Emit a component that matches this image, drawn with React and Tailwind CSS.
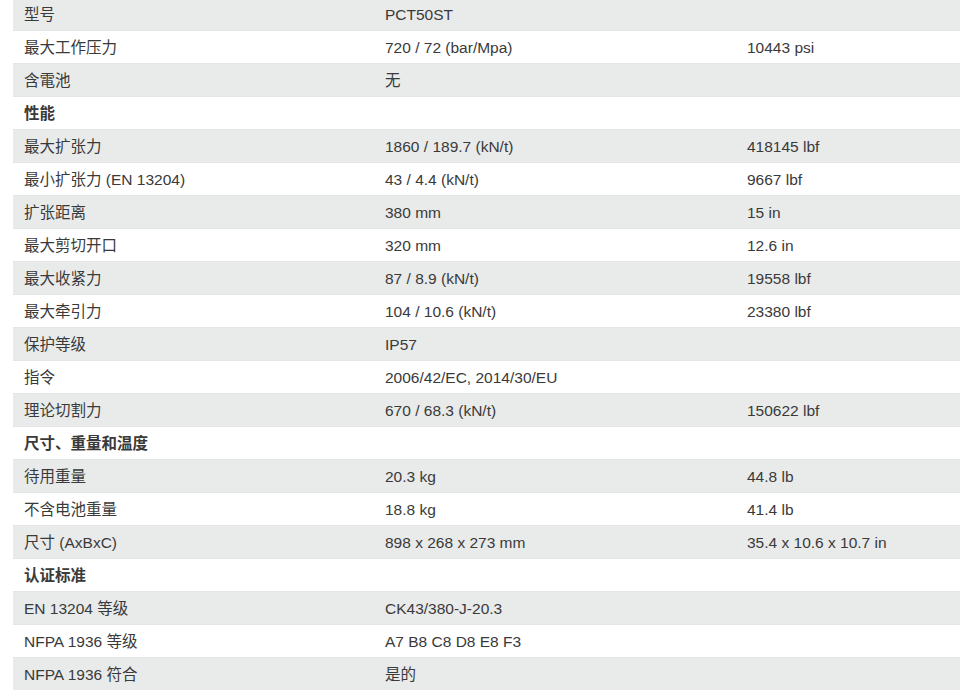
const rows = [
  ["型号", "PCT50ST", ""],
  ["最大工作压力", "720 / 72 (bar/Mpa)", "10443 psi"],
  ["含電池", "无", ""],
  { section: "性能" },
  ["最大扩张力", "1860 / 189.7 (kN/t)", "418145 lbf"],
  ["最小扩张力 (EN 13204)", "43 / 4.4 (kN/t)", "9667 lbf"],
  ["扩张距离", "380 mm", "15 in"],
  ["最大剪切开口", "320 mm", "12.6 in"],
  ["最大收紧力", "87 / 8.9 (kN/t)", "19558 lbf"],
  ["最大牵引力", "104 / 10.6 (kN/t)", "23380 lbf"],
  ["保护等级", "IP57", ""],
  ["指令", "2006/42/EC, 2014/30/EU", ""],
  ["理论切割力", "670 / 68.3 (kN/t)", "150622 lbf"],
  { section: "尺寸、重量和温度" },
  ["待用重量", "20.3 kg", "44.8 lb"],
  ["不含电池重量", "18.8 kg", "41.4 lb"],
  ["尺寸 (AxBxC)", "898 x 268 x 273 mm", "35.4 x 10.6 x 10.7 in"],
  { section: "认证标准" },
  ["EN 13204 等级", "CK43/380-J-20.3", ""],
  ["NFPA 1936 等级", "A7 B8 C8 D8 E8 F3", ""],
  ["NFPA 1936 符合", "是的", ""],
];

function SpecRow({ row, striped }) {
  const bg = striped ? "bg-[#e9eaea]" : "bg-white";
  if (row.section) {
    return (
      <div className={`h-[33px] pt-[2px] flex items-center px-[11px] font-bold border-t border-[#e4e5e5] ${bg}`}>
        {row.section}
      </div>
    );
  }
  return (
    <div className={`grid grid-cols-[361px_362px_1fr] h-[33px] pt-[2px] items-center border-t border-[#e4e5e5] ${bg}`}>
      <div className="px-[11px]">{row[0]}</div>
      <div className="px-[11px]">{row[1]}</div>
      <div className="px-[11px]">{row[2]}</div>
    </div>
  );
}

export default function App() {
  return (
    <div className="w-[960px] h-[690px] overflow-hidden bg-white">
      <div
        className="ml-[13px] -mt-[3px] text-[15.5px] text-[#3a3a3a] leading-none"
        style={{ fontFamily: '"Liberation Sans", "Noto Sans CJK SC", sans-serif' }}
      >
        {rows.map((row, i) => (
          <SpecRow key={i} row={row} striped={i % 2 === 0} />
        ))}
      </div>
    </div>
  );
}
